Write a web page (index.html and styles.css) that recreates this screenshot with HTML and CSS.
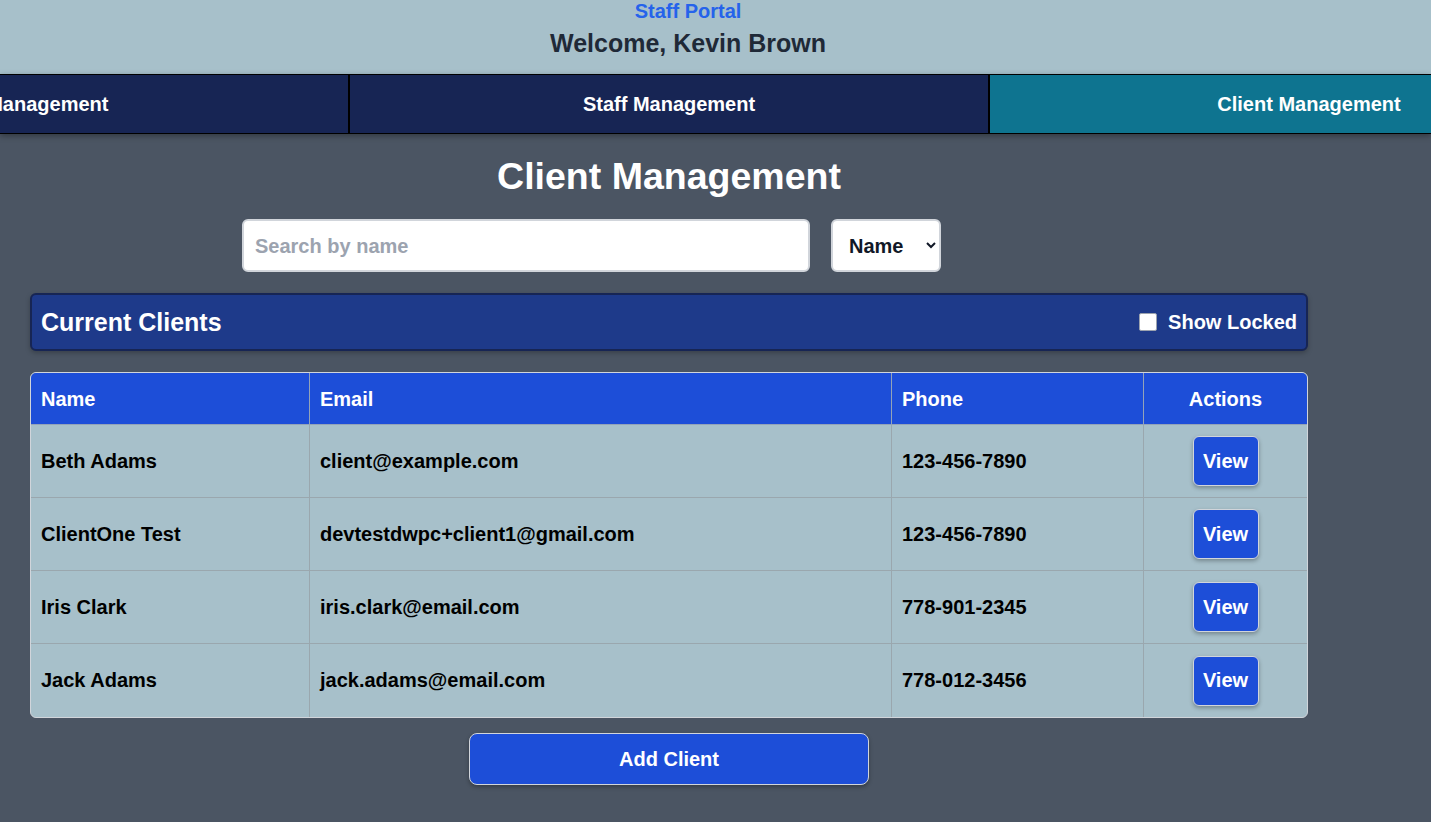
FILE: index.html
```html
<!DOCTYPE html>
<html lang="en">
<head>
<meta charset="utf-8">
<title>Staff Portal - Client Management</title>
<link rel="stylesheet" href="styles.css">
</head>
<body>
<header class="top-header">
  <div class="portal-name">Staff Portal</div>
  <div class="welcome">Welcome, Kevin Brown</div>
</header>
<nav class="tab-nav">
  <div class="tab-track">
    <a class="tab" href="#">Pet Management</a>
    <a class="tab" href="#">Staff Management</a>
    <a class="tab tab-active" href="#">Client Management</a>
  </div>
</nav>
<main class="main">
  <h1 class="page-title">Client Management</h1>
  <div class="search-row">
    <input class="search-input" type="text" placeholder="Search by name">
    <select class="sort-select">
      <option>Name</option>
      <option>Email</option>
    </select>
  </div>
  <section class="clients-bar">
    <h2 class="clients-title">Current Clients</h2>
    <label class="locked-toggle"><input type="checkbox" class="locked-check"><span>Show Locked</span></label>
  </section>
  <div class="table-wrap">
    <table class="client-table">
      <thead>
        <tr>
          <th class="col-name">Name</th>
          <th class="col-email">Email</th>
          <th class="col-phone">Phone</th>
          <th class="col-actions">Actions</th>
        </tr>
      </thead>
      <tbody>
        <tr>
          <td>Beth Adams</td>
          <td>client@example.com</td>
          <td>123-456-7890</td>
          <td class="cell-actions"><button class="view-btn">View</button></td>
        </tr>
        <tr>
          <td>ClientOne Test</td>
          <td>devtestdwpc+client1@gmail.com</td>
          <td>123-456-7890</td>
          <td class="cell-actions"><button class="view-btn">View</button></td>
        </tr>
        <tr>
          <td>Iris Clark</td>
          <td>iris.clark@email.com</td>
          <td>778-901-2345</td>
          <td class="cell-actions"><button class="view-btn">View</button></td>
        </tr>
        <tr>
          <td>Jack Adams</td>
          <td>jack.adams@email.com</td>
          <td>778-012-3456</td>
          <td class="cell-actions"><button class="view-btn">View</button></td>
        </tr>
      </tbody>
    </table>
  </div>
  <div class="add-row">
    <button class="add-btn">Add Client</button>
  </div>
</main>
</body>
</html>
```

FILE: styles.css
```css
* {
  box-sizing: border-box;
}

html, body {
  margin: 0;
  padding: 0;
}

body {
  font-family: "Liberation Sans", Arial, sans-serif;
  font-weight: bold;
  font-size: 20px;
  background: #4b5563;
  overflow: hidden;
  height: 822px;
}

.top-header {
  background: #a7c0ca;
  height: 74px;
  display: flex;
  flex-direction: column;
  align-items: center;
  padding-right: 55px;
}

.portal-name {
  color: #2563eb;
  font-size: 20px;
  line-height: 23px;
}

.welcome {
  color: #1f2937;
  font-size: 25px;
  line-height: 29px;
  margin-top: 6px;
}

.tab-nav {
  border-top: 1px solid #000;
  border-bottom: 1px solid #000;
  height: 60px;
  overflow: hidden;
  background: #172554;
  box-shadow: 0 2px 6px rgba(0, 0, 0, 0.35);
  position: relative;
}

.tab-track {
  display: flex;
  margin-left: -290px;
  width: 1920px;
  height: 100%;
}

.tab {
  width: 640px;
  flex: none;
  display: flex;
  align-items: center;
  justify-content: center;
  color: #fff;
  text-decoration: none;
  background: #172554;
  border-right: 2px solid #000;
}

.tab-active {
  background: #0e7490;
}

.main {
  width: 1338px;
  padding: 21px 30px 30px 30px;
}

.page-title {
  margin: 0 0 21px 0;
  font-size: 37.5px;
  line-height: 43px;
  color: #fff;
  text-align: center;
}

.search-row {
  display: flex;
  justify-content: center;
  gap: 21px;
  padding-right: 155px;
  height: 53px;
}

.search-input {
  width: 568px;
  height: 53px;
  border: 2px solid #d1d5db;
  border-radius: 6px;
  background: #fff;
  font: bold 20px "Liberation Sans", Arial, sans-serif;
  padding: 1px 11px 0 11px;
  color: #111827;
  outline: none;
}

.search-input::placeholder {
  color: #9ca3af;
}

.sort-select {
  width: 110px;
  height: 53px;
  border: 2px solid #d1d5db;
  border-radius: 6px;
  background: #fff;
  font: bold 20px "Liberation Sans", Arial, sans-serif;
  color: #111827;
  padding: 0 8px 0 12px;
}

.clients-bar {
  margin-top: 21px;
  height: 58px;
  background: #1e3a8a;
  border: 2px solid #172554;
  border-radius: 6px;
  box-shadow: 0 2px 5px rgba(0, 0, 0, 0.25);
  display: flex;
  align-items: center;
  justify-content: space-between;
  padding: 0 9px 0 9px;
}

.clients-title {
  margin: 0;
  font-size: 25px;
  color: #fff;
  line-height: 29px;
}

.locked-toggle {
  display: flex;
  align-items: center;
  gap: 11px;
  color: #fff;
  font-size: 20px;
}

.locked-check {
  margin: 0;
  width: 18px;
  height: 18px;
  appearance: none;
  background: #fff;
  border: 1px solid #9ca3af;
  border-radius: 2px;
}

.table-wrap {
  margin-top: 21px;
  border: 1px solid #d1d5db;
  border-radius: 6px;
  overflow: hidden;
  background: #a7c0ca;
}

.client-table {
  width: 100%;
  border-collapse: separate;
  border-spacing: 0;
  table-layout: fixed;
}

.col-name { width: 279px; }
.col-email { width: 582px; }
.col-phone { width: 252px; }
.col-actions { width: 163px; }

.client-table th {
  background: #1d4ed8;
  color: #fff;
  text-align: left;
  height: 52px;
  padding: 2px 10px 0 10px;
  border-right: 1px solid #93a3b8;
  border-bottom: 1px solid #93a3b8;
  font-size: 20px;
}

.client-table th.col-actions {
  text-align: center;
}

.client-table td {
  color: #000;
  height: 73px;
  padding: 0 10px;
  border-right: 1px solid #9aa7ae;
  border-bottom: 1px solid #9aa7ae;
  vertical-align: middle;
  font-size: 20px;
}

.client-table tr > :last-child {
  border-right: none;
}

.client-table tbody tr:last-child td {
  border-bottom: none;
}

.cell-actions {
  text-align: center;
}

.view-btn {
  background: #1d4ed8;
  color: #fff;
  font: bold 20px "Liberation Sans", Arial, sans-serif;
  border: 1px solid #d1d5db;
  border-radius: 6px;
  width: 66px;
  height: 50px;
  padding: 0;
  box-shadow: 0 2px 4px rgba(0, 0, 0, 0.3);
}

.add-row {
  display: flex;
  justify-content: center;
  margin-top: 15px;
}

.add-btn {
  width: 400px;
  height: 52px;
  background: #1d4ed8;
  color: #fff;
  font: bold 20px "Liberation Sans", Arial, sans-serif;
  border: 1px solid #d1d5db;
  border-radius: 8px;
  box-shadow: 0 2px 4px rgba(0, 0, 0, 0.3);
}
```
